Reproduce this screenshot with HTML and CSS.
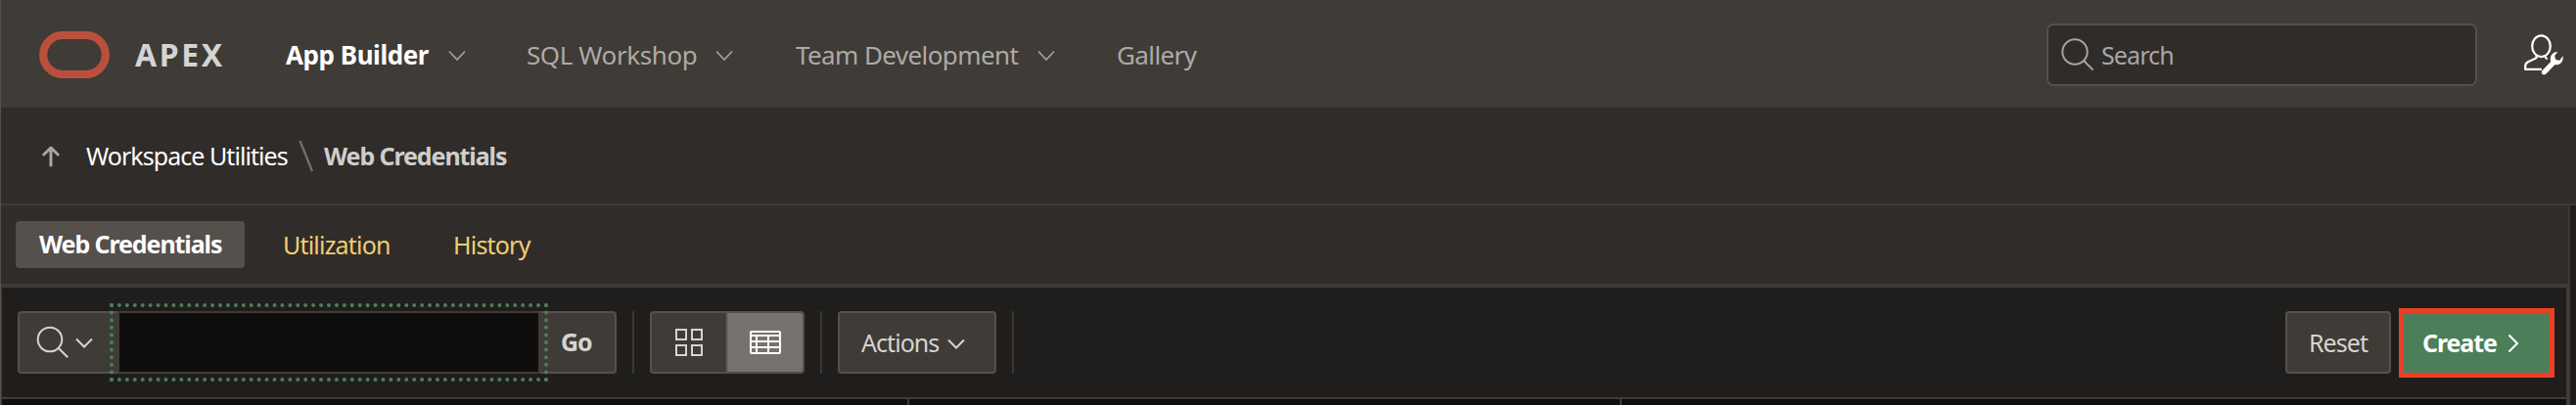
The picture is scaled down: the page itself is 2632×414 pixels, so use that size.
FILE: index.html
```
<!DOCTYPE html>
<html lang="en">
<head>
<meta charset="utf-8">
<title>Web Credentials</title>
<link rel="stylesheet" href="styles.css">
</head>
<body>
<div class="app">
  <header class="header">
    <svg class="logo" width="72" height="48" viewBox="0 0 72 48"><rect x="4.2" y="4" width="63.6" height="40" rx="20" fill="none" stroke="#b9503d" stroke-width="8.2"/></svg>
    <span class="brand">APEX</span>
    <nav class="nav">
      <a class="nav-item builder">App Builder</a>
      <svg class="chev" width="18" height="12" viewBox="0 0 18 12"><path d="M1 1.5l8 8.5 8-8.5"/></svg>
      <a class="nav-item sql">SQL Workshop</a>
      <svg class="chev" width="18" height="12" viewBox="0 0 18 12"><path d="M1 1.5l8 8.5 8-8.5"/></svg>
      <a class="nav-item team">Team Development</a>
      <svg class="chev" width="18" height="12" viewBox="0 0 18 12"><path d="M1 1.5l8 8.5 8-8.5"/></svg>
      <a class="nav-item gallery">Gallery</a>
    </nav>
    <div class="search">
      <svg width="34" height="34" viewBox="0 0 34 34" fill="none" stroke="#a5a29f" stroke-width="2"><circle cx="14" cy="14" r="12.7"/><path d="M23 23l9.5 9.5"/></svg>
      <span class="search-text">Search</span>
    </div>
    <svg class="user" width="42" height="42" viewBox="0 0 42 42"><g fill="none" stroke="#fff" stroke-width="2.2" stroke-linejoin="round"><ellipse cx="18.5" cy="12.2" rx="9.3" ry="10.9"/><path d="M13.5 22v2.2L5 28.2q-2.8 1.5-2.8 4.3V35.9H19"/><path d="M22.5 22.8q.6 2 2.3 2.5"/></g><path d="M19.4 37.3l8.800-9.300c-1.600-5.300 1.800-10.300 7-10.100l-3 4.200 1 4 4 .6 3.400-4.500c1 5.500-2.800 9.700-8.300 9l-8.800 9.400c-2.800 2.200-6-.7-4.100-3.300z" fill="#fff"/></svg>
  </header>
  <div class="breadcrumb">
    <svg class="up" width="18" height="22" viewBox="0 0 18 22" fill="none" stroke="#a9a6a4" stroke-width="3" stroke-linecap="round" stroke-linejoin="round"><path d="M9 20V2.5M1.800 9L9 2l7.200 7"/></svg>
    <a class="crumb">Workspace Utilities</a>
    <svg class="slash" width="16" height="33" viewBox="0 0 16 33"><path d="M1.500 1l12.500 31" stroke="#75716f" stroke-width="2.200" fill="none"/></svg>
    <span class="crumb-current">Web Credentials</span>
  </div>
  <div class="region">
    <div class="tabs">
      <a class="tab active">Web Credentials</a>
      <a class="tab utilization">Utilization</a>
      <a class="tab history">History</a>
    </div>
    <div class="report">
      <div class="toolbar">
        <div class="search-group">
          <div class="column-btn">
            <svg width="34" height="34" viewBox="0 0 34 34" fill="none" stroke="#d6d4d1" stroke-width="2"><circle cx="14" cy="14" r="12.300"/><path d="M22.700 22.700l9.500 9.500"/></svg>
            <svg class="small-chev" width="18" height="12" viewBox="0 0 18 12"><path d="M1 1.500l8 8 8-8"/></svg>
          </div>
          <div class="field">
            <svg class="focus" width="448" height="80" viewBox="0 0 448 80" fill="none" stroke="#4c7f59" stroke-width="4" stroke-linecap="round"><path d="M2 2H446M2 78H446" stroke-dasharray="0 7.928"/><path d="M2 2V78M446 2V78" stroke-dasharray="0 7.600"/></svg>
          </div>
          <div class="go">Go</div>
        </div>
        <i class="sep"></i>
        <div class="views">
          <div class="view"><svg width="30" height="30" viewBox="0 0 30 30" fill="none" stroke="#d6d4d1" stroke-width="2"><path d="M2 2h10v10H2zM18 2h10v10H18zM2 18h10v10H2zM18 18h10v10H18z"/></svg></div>
          <div class="view selected"><svg width="32" height="24" viewBox="0 0 32 24" fill="none" stroke="#fff" stroke-width="2"><rect x="1" y="1" width="30" height="22" rx="1"/><path d="M1 5h30M1 11h30M1 17h30M7 5v18M19 5v18"/></svg></div>
        </div>
        <i class="sep"></i>
        <div class="button actions"><span>Actions</span><svg class="small-chev" width="18" height="12" viewBox="0 0 18 12"><path d="M1 1.500l8 8 8-8"/></svg></div>
        <i class="sep"></i>
        <div class="button reset"><span>Reset</span></div>
        <div class="create"><span>Create</span><svg width="12" height="20" viewBox="0 0 12 20" fill="none" stroke="#fff" stroke-width="2"><path d="M1.500 1.500l8.500 8.500-8.500 8.500"/></svg></div>
      </div>
      <div class="grid"><i></i><i></i><i></i></div>
    </div>
  </div>
</div>
</body>
</html>
```
FILE: styles.css
```
* { box-sizing: border-box; }
body { margin: 0; background: #1f1d1b; font-family: "Noto Sans", "Open Sans", sans-serif; font-size: 25px; color: #d6d4d1; }
svg { display: block; flex: none; }
.app { width: 2632px; height: 414px; overflow: hidden; border-left: 1px solid #55504c; white-space: nowrap; }
.header { display: flex; align-items: center; height: 110px; padding-left: 39px; background: #3f3b36; }
.logo { margin-top: 2px; }
.brand { width: 96px; margin-left: 26px; font-size: 32px; font-weight: 700; letter-spacing: 2.6px; color: #d5d4d3; padding-top: 1px; }
.nav { display: flex; align-items: center; margin-left: 56px; padding-top: 2px; font-size: 26px; color: #acaaa7; }
.nav-item { flex: none; letter-spacing: -.6px; }
.builder { width: 166px; margin-left: 2px; font-weight: 700; color: #fff; letter-spacing: -.45px; }
.sql { width: 193px; margin-left: 62px; letter-spacing: -.4px; }
.team { width: 247px; margin-left: 64px; }
.gallery { width: 90px; margin-left: 63px; }
.chev { margin-top: 2px; fill: none; stroke: #a29f9c; stroke-width: 1.8; }
.search { display: flex; align-items: center; width: 440px; height: 64px; margin-left: auto; margin-top: 2px; padding-left: 13px; border: 2px solid #55504b; border-radius: 7px; background: #302c29; color: #a9a6a3; }
.search-text { margin-left: 7px; letter-spacing: -.9px; }
.user { margin: 2px 12px 0 47px; }
.breadcrumb { display: flex; align-items: center; height: 98px; padding-left: 42px; background: #302c29; }
.up { margin-top: 2px; }
.crumb { width: 217px; margin-left: 27px; color: #fff; letter-spacing: -.95px; }
.crumb-current { margin-left: 10px; font-weight: 700; color: #d0cecc; letter-spacing: -1.1px; }
.region { height: 206px; border-top: 2px solid #3f3b38; background: linear-gradient(90deg, transparent 2623px, #3b3734 2623px, #3b3734 2625px, #1f1d1b 2625px); }
.tabs { display: flex; align-items: center; width: 2623px; height: 80px; padding-left: 15px; background: #302c29; }
.tab { color: #f0cd73; letter-spacing: -.8px; }
.tab.active { width: 234px; height: 48px; padding-left: 24px; line-height: 47px; border-radius: 4px; background: #55504c; color: #fff; font-weight: 700; letter-spacing: -1.1px; }
.utilization { width: 174px; margin-left: 39px; }
.report { width: 2625px; height: 124px; border: solid #3f3b36; border-width: 4px 4px 0 1px; background: #201e1c; }
.toolbar { display: flex; align-items: center; height: 112px; padding: 0 12px 0 16px; }
.search-group { display: flex; width: 612px; height: 64px; border: 2px solid #55504c; border-radius: 4px; background: #3f3b36; }
.column-btn { display: flex; align-items: center; width: 100px; padding-left: 17px; gap: 6px; }
.small-chev { fill: none; stroke: #d6d4d1; stroke-width: 2; }
.column-btn .small-chev { margin-top: 2px; }
.field { position: relative; width: 432px; height: 64px; margin-top: -2px; border: 2px solid #3f3b36; background: #100e0c; }
.focus { position: absolute; left: -10px; top: -10px; }
.go { padding-left: 21px; font-weight: 700; line-height: 59px; letter-spacing: -1px; }
.sep { width: 2px; height: 64px; margin-left: 16px; background: #3b3733; }
.views { display: flex; width: 158px; height: 64px; margin-left: 16px; border: 2px solid #55504c; border-radius: 4px; background: #3f3b36; overflow: hidden; }
.view { display: flex; align-items: center; justify-content: center; width: 76px; }
.view.selected { width: 80px; margin: -2px -2px -2px 0; border: 2px solid #68625e; background: #78726e; border-radius: 0 4px 4px 0; }
.button { display: flex; align-items: center; height: 64px; border: 2px solid #55504c; border-radius: 4px; background: #3f3b36; letter-spacing: -.95px; }
.button span, .create span { padding-bottom: 1px; }
.actions { width: 162px; margin-left: 16px; padding-left: 22px; gap: 9px; }
.actions .small-chev { margin-top: 3px; }
.reset { width: 108px; margin-left: auto; padding-left: 22px; }
.create { display: flex; align-items: center; width: 159px; height: 71px; margin-left: 8px; padding-left: 19px; gap: 11px; border: 5px solid #eb4025; background: #4c7f59; color: #fff; font-weight: 700; letter-spacing: -1.1px; margin-top: 1px; }
.grid { display: flex; height: 8px; border-top: 2px solid #3f3b36; background: #100e0c; }
.grid i { border-right: 2px solid #3f3b36; width: 728px; }
.grid i:first-child { width: 927px; }
.grid i:last-child { flex: 1; border: 0; }
```
